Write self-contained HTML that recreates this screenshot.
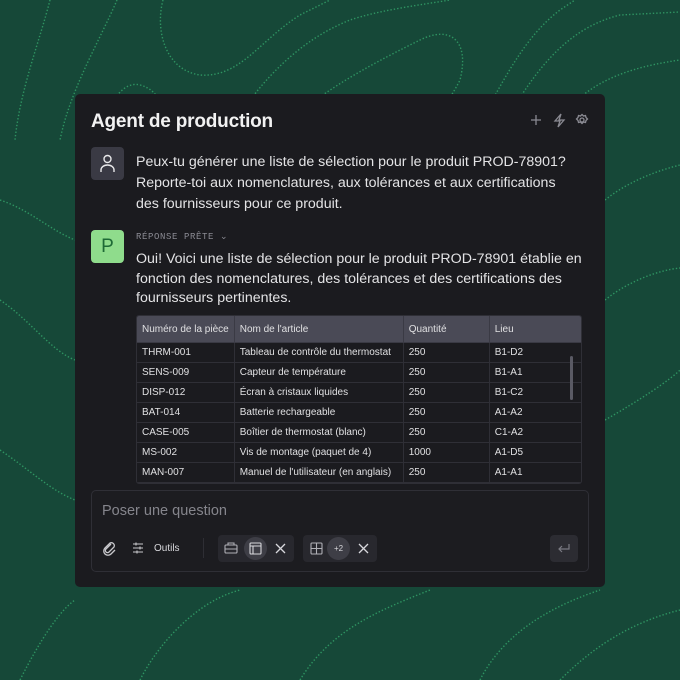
<!DOCTYPE html>
<html><head><meta charset="utf-8"><style>
*{margin:0;padding:0;box-sizing:border-box}
body{width:680px;height:680px;background:#164838;position:relative;overflow:hidden;font-family:"Liberation Sans",sans-serif}
.bg{position:absolute;left:0;top:0}
.panel{position:absolute;left:75px;top:94px;width:530px;height:493px;background:#1b1b1f;border-radius:5px}
.abs{position:absolute}
.title{left:16px;top:17px;font-size:19px;font-weight:bold;color:#f2f2f2;letter-spacing:-0.2px}
.txt{color:#e4e4e6;font-size:14.2px}
table{border-collapse:collapse;font-size:10px;color:#e0e0e2}
td,th{border:1px solid #2f2f36;height:20px;padding:0 5px;text-align:left;font-weight:normal;white-space:nowrap}
th{background:#4a4a56;height:27px;border-color:#3a3a44}
.chip{background:#28282e;border-radius:4px;height:27px;top:441px}
</style></head><body>
<svg class="bg" width="680" height="680" fill="none" stroke="#2f9462" stroke-width="1.4" stroke-dasharray="1.4 2">
<path d="M50 0 C40 40 20 90 15 140"/>
<path d="M117 0 C100 40 70 90 60 140"/>
<path d="M163 0 C155 30 165 70 200 75 C240 78 260 40 300 15 L330 0"/>
<path d="M230 130 C260 80 300 40 350 20 C380 10 420 5 450 0"/>
<path d="M280 130 C320 90 380 60 420 40 C450 25 470 40 460 80 C450 100 440 110 430 130"/>
<path d="M340 130 C360 110 375 100 385 115"/>
<path d="M100 140 C105 110 120 80 140 85 C160 90 165 110 165 130"/>
<path d="M475 130 C500 90 520 40 560 10 L575 0"/>
<path d="M500 130 C530 80 560 30 620 15 L680 12"/>
<path d="M550 130 C580 90 610 70 680 60"/>
<path d="M605 200 C630 180 660 170 680 165"/>
<path d="M605 300 C630 280 660 270 680 268"/>
<path d="M605 420 C640 400 670 380 680 370"/>
<path d="M0 300 C30 320 50 350 75 360"/>
<path d="M0 450 C30 470 50 490 75 500"/>
<path d="M20 680 C40 640 60 610 75 600"/>
<path d="M140 680 C160 640 200 600 240 590"/>
<path d="M300 680 C330 630 380 610 430 590"/>
<path d="M480 680 C500 640 540 610 600 590"/>
<path d="M560 680 C600 640 640 620 680 610"/>
<path d="M0 200 C30 210 50 230 75 240"/>
</svg>
<div class="panel">
<div class="abs title">Agent de production</div>
<svg class="abs" style="left:455px;top:18px" width="62" height="16" fill="none" stroke="#8a8a92" stroke-width="1.3">
<path d="M6 3v10M1 8h10"/>
<path d="M31 2l-6 7h5l-2 6 6-7h-5z"/>
<circle cx="52" cy="8" r="2"/><path d="M52 2.5l1.5 1.5 2-0.5 0.5 2 1.5 1.5-1.5 1.5-0.5 2-2-0.5-1.5 1.5-1.5-1.5-2 0.5-0.5-2-1.5-1.5 1.5-1.5 0.5-2 2 0.5z"/>
</svg>
<div class="abs" style="left:16px;top:53px;width:33px;height:33px;background:#3a3a44;border-radius:4px"></div>
<svg class="abs" style="left:16px;top:53px" width="33" height="33" fill="none" stroke="#e8e8ea" stroke-width="1.4"><circle cx="16.5" cy="12" r="3.5"/><path d="M10 25v-2a6.5 5 0 0 1 13 0v2"/></svg>
<div class="abs txt" style="left:61px;top:58px;line-height:21px;width:440px">Peux-tu générer une liste de sélection pour le produit PROD-78901? Reporte-toi aux nomenclatures, aux tolérances et aux certifications des fournisseurs pour ce produit.</div>
<div class="abs" style="left:16px;top:136px;width:33px;height:33px;background:#8fdc8c;border-radius:4px;color:#1e6a36;font-size:19px;text-align:center;line-height:33px">P</div>
<div class="abs" style="left:61px;top:138px;font-family:'Liberation Mono',monospace;font-size:9px;color:#8a8a92;letter-spacing:0.6px">RÉPONSE PRÊTE <span style="font-family:'DejaVu Sans';font-size:9px">⌄</span></div>
<div class="abs txt" style="left:61px;top:156px;line-height:19.5px;width:450px">Oui! Voici une liste de sélection pour le produit PROD-78901 établie en fonction des nomenclatures, des tolérances et des certifications des fournisseurs pertinentes.</div>
<div class="abs" style="left:61px;top:221px;width:446px;height:169px;overflow:hidden;border-radius:3px;border:1px solid #2f2f36">
<table style="width:446px;margin:-1px">
<tr><th style="width:97px">Numéro de la pièce</th><th style="width:169px">Nom de l'article</th><th style="width:86px">Quantité</th><th>Lieu</th></tr>
<tr><td>THRM-001</td><td>Tableau de contrôle du thermostat</td><td>250</td><td>B1-D2</td></tr>
<tr><td>SENS-009</td><td>Capteur de température</td><td>250</td><td>B1-A1</td></tr>
<tr><td>DISP-012</td><td>Écran à cristaux liquides</td><td>250</td><td>B1-C2</td></tr>
<tr><td>BAT-014</td><td>Batterie rechargeable</td><td>250</td><td>A1-A2</td></tr>
<tr><td>CASE-005</td><td>Boîtier de thermostat (blanc)</td><td>250</td><td>C1-A2</td></tr>
<tr><td>MS-002</td><td>Vis de montage (paquet de 4)</td><td>1000</td><td>A1-D5</td></tr>
<tr><td>MAN-007</td><td>Manuel de l'utilisateur (en anglais)</td><td>250</td><td>A1-A1</td></tr>
</table></div>
<div class="abs" style="left:495px;top:262px;width:3px;height:44px;background:#5a5a64;border-radius:2px"></div>
<div class="abs" style="left:16px;top:396px;width:498px;height:82px;border:1px solid #2f2f36;border-radius:5px;background:#1c1c20"></div>
<div class="abs" style="left:27px;top:409px;font-size:14.5px;color:#85858c">Poser une question</div>
<svg class="abs" style="left:26px;top:446px" width="90" height="16" fill="none" stroke="#c8c8cc" stroke-width="1.3">
<path d="M10 4l-5 5a2 2 0 0 0 3 3l5-5a3 3 0 0 0-4-4l-5 5a4 4 0 0 0 6 6l4-4"/>
<path d="M32 4h10M32 8h10M32 12h10M35 2.5v3M39 6.5v3M36 10.5v3" stroke-width="1.1"/>
</svg>
<div class="abs" style="left:79px;top:449px;font-size:10px;color:#d8d8dc">Outils</div>
<div class="abs" style="left:128px;top:444px;width:1px;height:20px;background:#2e2e34"></div>
<div class="abs chip" style="left:143px;width:76px"></div>
<div class="abs" style="left:169px;top:443px;width:23px;height:23px;border-radius:50%;background:#3e3e46"></div>
<svg class="abs" style="left:143px;top:441px" width="76" height="27" fill="none" stroke="#b0b0b6" stroke-width="1.1">
<rect x="7" y="10" width="12" height="8" rx="1"/><path d="M10 10V8h6v2M7 14h12"/>
<rect x="32" y="8" width="11" height="11" rx="1" stroke="#d8d8dc"/><path d="M32 11h11M35 11v8" stroke="#d8d8dc"/>
<path d="M58 9l9 9M67 9l-9 9" stroke="#d8d8dc" stroke-width="1.3"/>
</svg>
<div class="abs chip" style="left:228px;width:74px"></div>
<div class="abs" style="left:252px;top:443px;width:23px;height:23px;border-radius:50%;background:#3e3e46;color:#d8d8dc;font-size:8px;text-align:center;line-height:23px">+2</div>
<svg class="abs" style="left:228px;top:441px" width="74" height="27" fill="none" stroke="#b0b0b6" stroke-width="1.1">
<rect x="8" y="8" width="11" height="11" rx="1"/><path d="M8 13.5h11M13.5 8v11"/>
<path d="M56 9l9 9M65 9l-9 9" stroke="#d8d8dc" stroke-width="1.3"/>
</svg>
<div class="abs" style="left:475px;top:441px;width:28px;height:27px;border-radius:4px;background:#2c2c32"></div>
<svg class="abs" style="left:475px;top:441px" width="28" height="27" fill="none" stroke="#7a7a82" stroke-width="1.2"><path d="M19 9v5h-10M12 11l-3 3 3 3"/></svg>
</div>
</body></html>
